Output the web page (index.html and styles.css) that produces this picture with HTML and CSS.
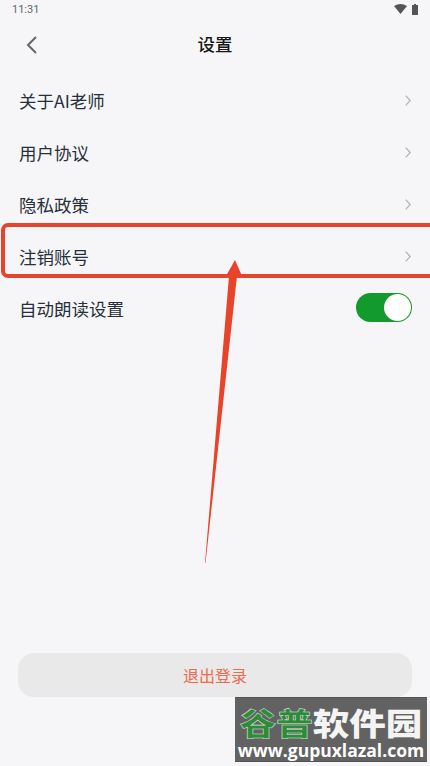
FILE: index.html
```html
<!DOCTYPE html>
<html lang="zh">
<head>
<meta charset="utf-8">
<title>设置</title>
<link rel="stylesheet" href="styles.css">
</head>
<body>
<div class="page">
  <div class="status">
    <span class="time">11:31</span>
    <span class="status-icons">
      <svg width="13" height="10" viewBox="0 0 13 10"><path d="M0 2 Q6.5-2 13 2L6.5 10Z" fill="#555"/></svg>
      <svg width="6" height="11" viewBox="0 0 6 11"><path d="M2 0h2v1h2v10H0V1h2Z" fill="#555"/></svg>
    </span>
  </div>
  <div class="nav">
    <svg class="back" width="14" height="18" viewBox="0 0 14 18"><path d="M11 1 3 9l8 8" fill="none" stroke="#666" stroke-width="2"/></svg>
    <span class="title">设置</span>
  </div>
  <div class="list">
    <div class="row"><span class="label">关于AI老师</span><svg class="chev" width="6" height="11" viewBox="0 0 6 11"><path d="M.7.7l4.5 4.800L.7 10.300" fill="none" stroke="#b0b0b4" stroke-width="1.200"/></svg></div>
    <div class="row"><span class="label">用户协议</span><svg class="chev" width="6" height="11" viewBox="0 0 6 11"><path d="M.7.7l4.5 4.800L.7 10.300" fill="none" stroke="#b0b0b4" stroke-width="1.200"/></svg></div>
    <div class="row"><span class="label">隐私政策</span><svg class="chev" width="6" height="11" viewBox="0 0 6 11"><path d="M.7.7l4.5 4.800L.7 10.300" fill="none" stroke="#b0b0b4" stroke-width="1.200"/></svg></div>
    <div class="row"><span class="label">注销账号</span><svg class="chev" width="6" height="11" viewBox="0 0 6 11"><path d="M.7.7l4.5 4.800L.7 10.300" fill="none" stroke="#b0b0b4" stroke-width="1.200"/></svg></div>
    <div class="row"><span class="label">自动朗读设置</span><span class="switch"><span class="knob"></span></span></div>
  </div>
  <div class="logout"><span class="logout-text">退出登录</span></div>
</div>
<div class="highlight"></div>
<svg class="arrow" width="430" height="766" viewBox="0 0 430 766"><path d="M235 260 242 276H237L205.500 563H205L229 276H226Z" fill="#e8442a"/></svg>
<div class="mark">
  <div class="mark-title"><span class="green">谷普</span><span class="slant">软件园</span></div>
  <div class="mark-url">www.gupuxlazal.com</div>
</div>
</body>
</html>
```
FILE: styles.css
```css
html, body { margin: 0; padding: 0; }
body {
  width: 430px;
  height: 766px;
  overflow: hidden;
  position: relative;
  background: #f6f6f9;
  font-family: "Noto Sans CJK SC", "Noto Sans", sans-serif;
}
.page {
  height: 766px;
  display: flex;
  flex-direction: column;
  box-sizing: border-box;
  padding-bottom: 69px;
}
.status {
  height: 20px;
  display: flex;
  justify-content: space-between;
  align-items: center;
  padding: 0 12px 2px 12px;
  box-sizing: border-box;
  font: 11px Roboto, sans-serif;
  color: #666;
}
.status-icons { display: flex; align-items: center; gap: 5px; }
.nav {
  height: 50px;
  position: relative;
  display: flex;
  align-items: center;
  justify-content: center;
}
.back { position: absolute; left: 25px; top: 16px; }
.title {
  font-size: 17.500px;
  font-weight: 500;
  color: #161616;
  margin-bottom: 3px;
}
.list { padding: 5px 18px 0 19px; }
.row {
  height: 52px;
  display: flex;
  align-items: center;
  justify-content: space-between;
  font-size: 17.500px;
  color: #27303a;
}
.label { margin-bottom: 2px; }
.chev { margin-right: 1px; margin-bottom: 1px; }
.switch {
  width: 56px;
  height: 29px;
  margin-bottom: 3px;
  border-radius: 15px;
  background: #129a2c;
  display: flex;
  justify-content: flex-end;
  align-items: center;
  padding: 1px;
  box-sizing: border-box;
}
.knob { width: 27px; height: 27px; border-radius: 50%; background: #fff; }
.logout {
  margin: auto 18px 0;
  height: 44px;
  border-radius: 16px;
  background: #e9e9ea;
  display: flex;
  align-items: center;
  justify-content: center;
  font-size: 16px;
  color: #ef6a4e;
}
.logout-text { margin-bottom: 1px; }
.highlight {
  position: absolute;
  left: 1px;
  top: 223px;
  width: 440px;
  height: 55px;
  box-sizing: border-box;
  border: 4px solid #e4452d;
  border-radius: 7px;
}
.arrow { position: absolute; left: 0; top: 0; }
.mark {
  position: absolute;
  left: 235px;
  top: 697px;
  width: 192px;
  height: 65px;
  box-sizing: border-box;
  border-top: 1px solid #555;
  border-bottom: 1px solid #555;
  background: #626262;
  color: #fff;
  display: flex;
  flex-direction: column;
  align-items: center;
  overflow: hidden;
}
.mark-title {
  display: flex;
  font-size: 36.500px;
  line-height: 36px;
  height: 36px;
  margin-top: 6px;
  font-weight: 900;
  white-space: nowrap;
  transform: scaleY(0.85);
}
.green { display: block; color: #2e8b3a; -webkit-text-stroke: 0.6px #d8e8d8; }
.slant { display: block; color: #f4f4f4; }
.mark-url {
  font: bold 17.500px/20px "Open Sans", sans-serif;
  white-space: nowrap;
}
```
